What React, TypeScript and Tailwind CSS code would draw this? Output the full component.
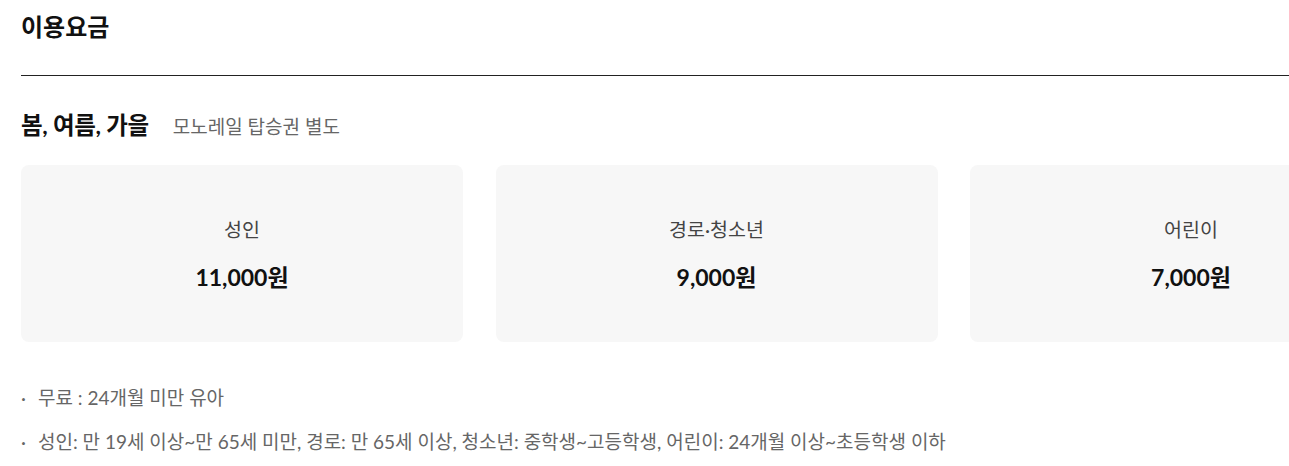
import React from 'react';

type Fare = {
  label: string;
  price: string;
};

const fares: Fare[] = [
  { label: '성인', price: '11,000원' },
  { label: '경로·청소년', price: '9,000원' },
  { label: '어린이', price: '7,000원' },
];

const notes = [
  '무료 : 24개월 미만 유아',
  '성인: 만 19세 이상~만 65세 미만, 경로: 만 65세 이상, 청소년: 중학생~고등학생, 어린이: 24개월 이상~초등학생 이하',
];

const App: React.FC = () => {
  return (
    <div
      className="w-full h-[466px] overflow-hidden bg-white"
      style={{ fontFamily: 'Lato, "Noto Sans CJK KR", sans-serif' }}
    >
      <div className="w-[1391px] pl-[21px]">
        <h2 className="pt-[11px] h-[75px] text-[24px] leading-[32px] font-bold text-[#111]">
          이용요금
        </h2>
        <div className="h-px bg-[#222]" />

        <div className="flex items-baseline gap-[24px] mt-[33px]">
          <h3 className="text-[23.5px] leading-[32px] font-bold text-[#111] tracking-[-0.3px]">
            봄, 여름, 가을
          </h3>
          <span className="text-[19px] text-[#666]">모노레일 탑승권 별도</span>
        </div>

        <div className="flex gap-[32.5px] mt-[23px]">
          {fares.map((fare) => (
            <div
              key={fare.label}
              className="w-[442px] h-[177px] shrink-0 rounded-[8px] bg-[#f7f7f7] flex flex-col items-center justify-center pt-[2px]"
            >
              <p className="text-[19.5px] leading-[28px] text-[#444]">{fare.label}</p>
              <p className="mt-[17px] text-[23px] leading-[32px] font-bold text-[#111]">
                {fare.price}
              </p>
            </div>
          ))}
        </div>

        <ul className="mt-[42px] flex flex-col gap-[17px]">
          {notes.map((note) => (
            <li key={note} className="flex text-[19px] leading-[27px] text-[#666]">
              <span className="w-[17px] shrink-0">·</span>
              <span>{note}</span>
            </li>
          ))}
        </ul>
      </div>
    </div>
  );
};

export default App;
